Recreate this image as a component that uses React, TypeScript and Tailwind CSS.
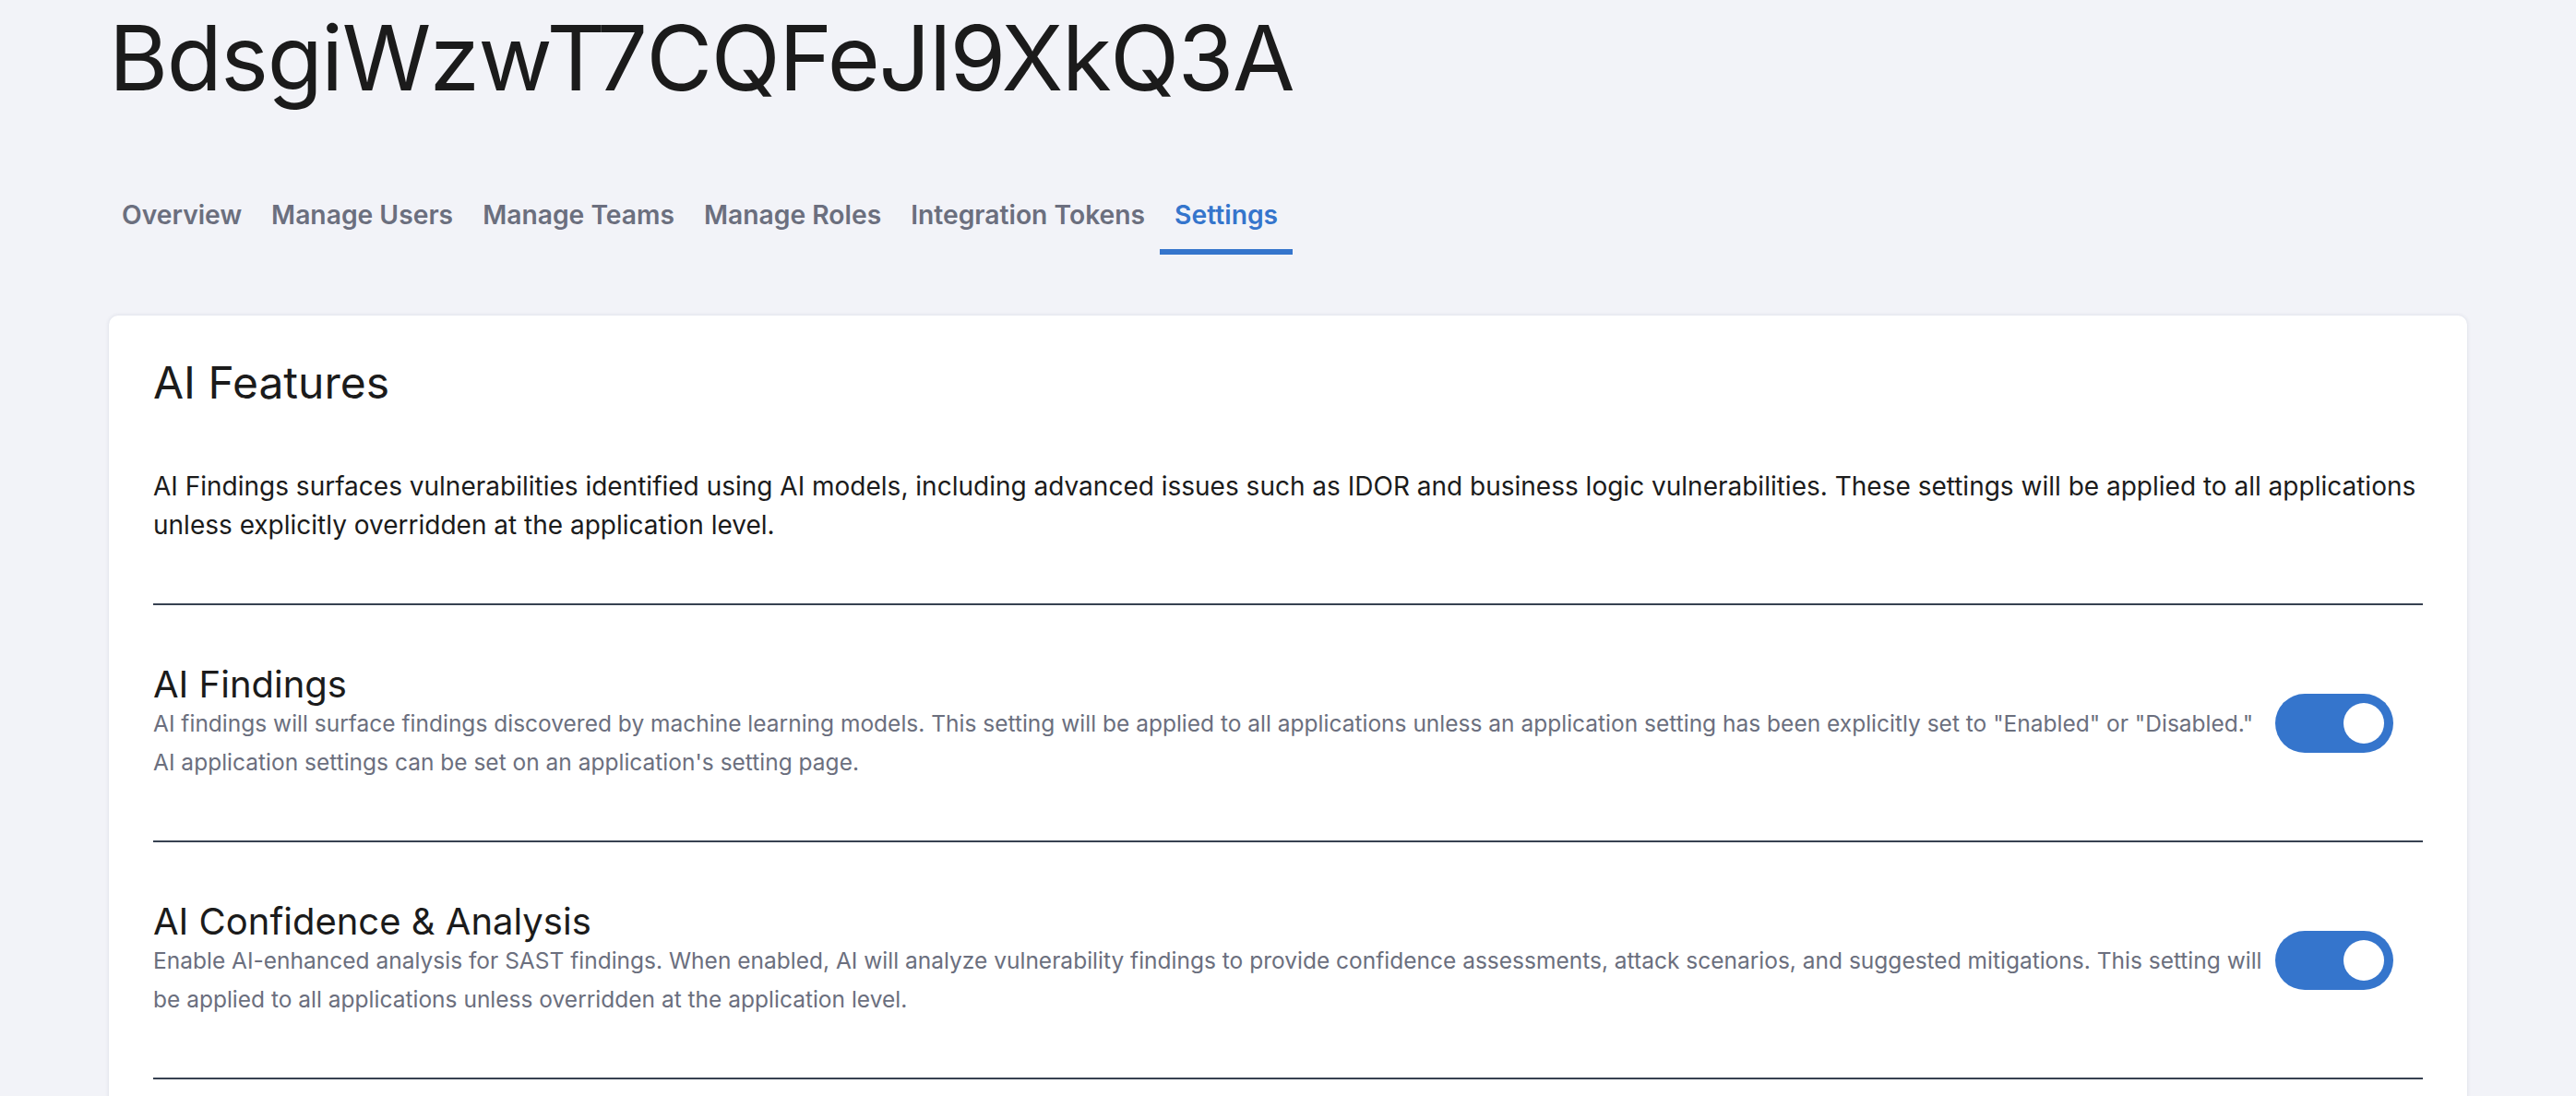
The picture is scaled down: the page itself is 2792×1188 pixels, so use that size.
import { useState } from 'react';

const tabs = ['Overview', 'Manage Users', 'Manage Teams', 'Manage Roles', 'Integration Tokens', 'Settings'];

type Setting = {
  id: string;
  title: string;
  description: string;
};

const settings: Setting[] = [
  {
    id: 'ai-findings',
    title: 'AI Findings',
    description:
      'AI findings will surface findings discovered by machine learning models. This setting will be applied to all applications unless an application setting has been explicitly set to "Enabled" or "Disabled." AI application settings can be set on an application\'s setting page.',
  },
  {
    id: 'ai-confidence',
    title: 'AI Confidence & Analysis',
    description:
      'Enable AI-enhanced analysis for SAST findings. When enabled, AI will analyze vulnerability findings to provide confidence assessments, attack scenarios, and suggested mitigations. This setting will be applied to all applications unless overridden at the application level.',
  },
];

function Toggle({ checked, onChange }: { checked: boolean; onChange: () => void }) {
  return (
    <button
      type="button"
      onClick={onChange}
      className={`relative shrink-0 mr-[32px] w-[128px] h-[64px] rounded-full transition-colors ${
        checked ? 'bg-[#3575cc]' : 'bg-[#d1d5db]'
      }`}
    >
      <span
        className={`absolute top-[10px] w-[44px] h-[44px] rounded-full bg-white transition-all ${
          checked ? 'right-[10px]' : 'left-[10px]'
        }`}
      ></span>
    </button>
  );
}

export default function App() {
  const [active, setActive] = useState('Settings');
  const [enabled, setEnabled] = useState<Record<string, boolean>>({
    'ai-findings': true,
    'ai-confidence': true,
  });

  return (
    <div className="min-h-screen bg-[#f2f3f8] font-['Inter','Liberation_Sans',sans-serif]">
      <div className="w-[2556px] mx-auto">
        {/* Header */}
        <h1 className="text-[98px] leading-[126px] font-normal text-[#1b1b1b] tracking-[-1.4px]">
          BdsgiWzwT7CQFeJl9XkQ3A
        </h1>

        {/* Tabs */}
        <nav className="mt-[70px] -ml-[2px] flex">
          {tabs.map((tab) => (
            <button
              key={tab}
              type="button"
              onClick={() => setActive(tab)}
              className={`px-[16px] pt-[16px] pb-[16px] border-b-[6px] text-[28.25px] leading-[42px] font-semibold ${
                active === tab ? 'border-[#3575cc] text-[#3575cc]' : 'border-transparent text-[#6b6f7e]'
              }`}
            >
              {tab}
            </button>
          ))}
        </nav>

        {/* Settings card */}
        <section className="mt-[66px] bg-white rounded-[10px] shadow-[0_0_4px_rgba(30,40,80,0.12)] px-[48px] pt-[48px] pb-[64px]">
          <h2 className="text-[48px] leading-[50px] font-normal text-[#1b1b1b]">AI Features</h2>
          <p className="mt-[66px] text-[28px] leading-[42px] text-[#1b1b1b]">
            AI Findings surfaces vulnerabilities identified using AI models, including advanced issues such as IDOR and
            business logic vulnerabilities. These settings will be applied to all applications unless explicitly
            overridden at the application level.
          </p>
          <div className="mt-[64px] h-[2px] bg-[#374151]"></div>

          {settings.map((setting) => (
            <div key={setting.id}>
              <div className="py-[64px] flex items-center justify-between gap-[4px]">
                <div className="flex-1">
                  <h3 className="text-[40px] leading-[43px] font-normal text-[#1b1b1b]">{setting.title}</h3>
                  <p className="text-[24.5px] leading-[42px] text-[#6b6f7e]">{setting.description}</p>
                </div>
                <Toggle
                  checked={enabled[setting.id]}
                  onChange={() => setEnabled({ ...enabled, [setting.id]: !enabled[setting.id] })}
                />
              </div>
              <div className="h-[2px] bg-[#374151]"></div>
            </div>
          ))}
        </section>
      </div>
    </div>
  );
}
